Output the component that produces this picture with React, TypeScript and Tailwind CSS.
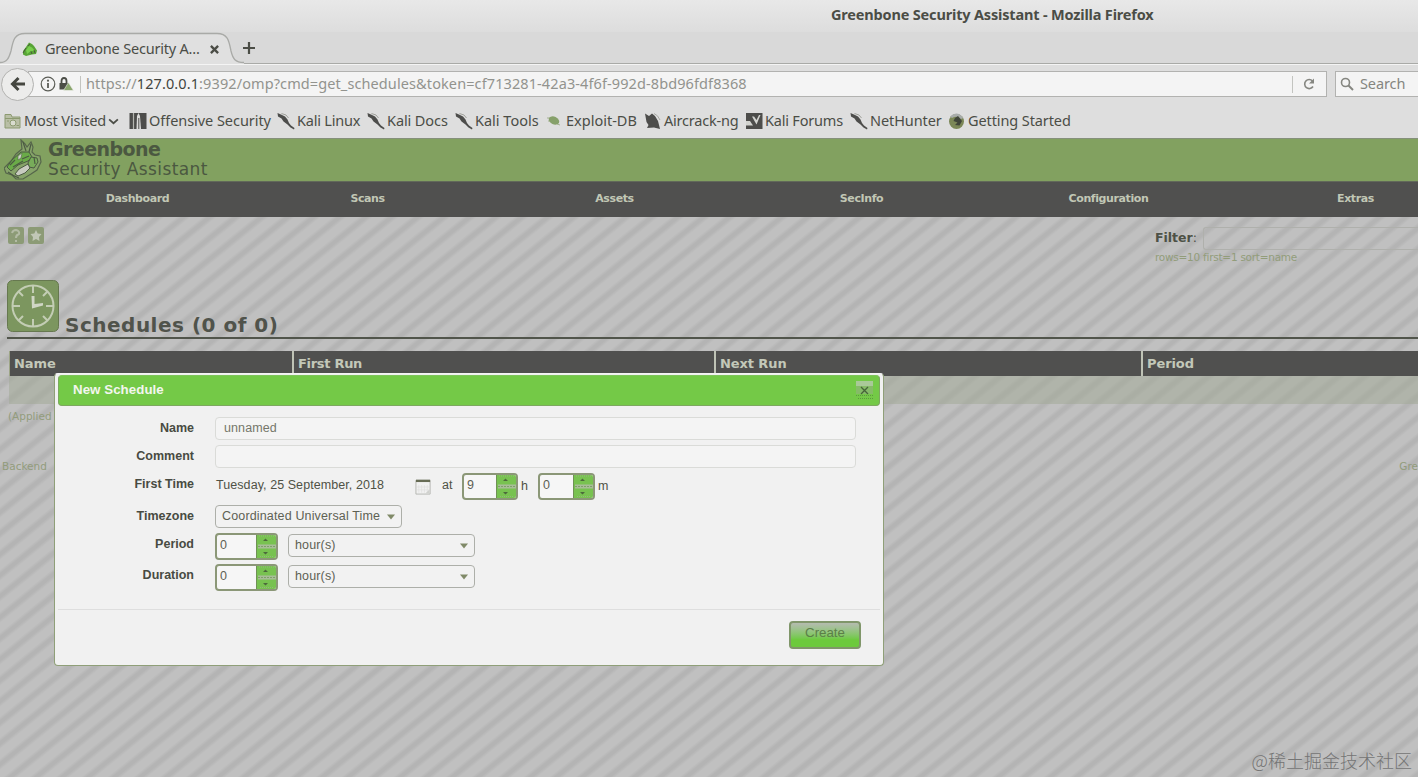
import type { ReactNode } from "react";
import { clsx } from "clsx";

function DragonIcon({ className }: { className?: string }) {
  return (
    <svg viewBox="0 0 16 16" className={className}>
      <path d="M1 10 L4 6 L7 1.5 L10 3 L12 5 L15 9.5 L14 13 L10 13.5 L4 15 L1 13.5 Z" fill="#58a436" />
      <path d="M4 9 L7 5 L10 6.5 L13 10 L9 10 L5 13 Z" fill="#79cf4e" />
      <path d="M1 12 L4 7 M9 10.5 L10 13 M12 9 L13 12 M6 5 L8 3" stroke="#4a5a3c" strokeWidth="1" fill="none" />
    </svg>
  );
}

function KaliIcon() {
  return (
    <svg viewBox="0 0 18 18" className="h-[18px] w-[18px] shrink-0">
      <path d="M0.500 1 L4 2.500 L8 4.500 L10.500 7.500 L12 11 L14 13.500 L17.500 16 L17 17.500 L13.500 15.500 L10.500 12.500 L6.500 9.500 L4.500 6.500 L1 4.500 Z" fill="#4d4d4b" />
      <path d="M4.500 1.500 L9 3 L11.500 6" stroke="#a0a19b" strokeWidth="1" fill="none" />
    </svg>
  );
}

function FolderIcon() {
  return (
    <svg viewBox="0 0 18 18" className="h-[18px] w-[18px] shrink-0">
      <path d="M1 2.5 H7 L8 5 H16 V16 H1 Z" fill="#b9bfa6" stroke="#8c9a70" />
      <path d="M1 6.5 H16" stroke="#8c9a70" />
      <circle cx="9" cy="11" r="3" fill="#d9dccf" stroke="#8c9a70" />
      <path d="M3 9 H5 M12.5 13.5 H15" stroke="#8c9a70" />
    </svg>
  );
}

function OffsecIcon() {
  return (
    <svg viewBox="0 0 18 18" className="h-[18px] w-[18px] shrink-0">
      <path d="M0.500 1 H17.500 V17 H0.500 Z" fill="#4d4d4b" />
      <path d="M4.5 1 V17" stroke="#b5b6b0" strokeWidth="1.2" />
      <path d="M7.500 17 L8 4 L9.500 1 L11 4 L12 17 Z" fill="#dcdcda" />
      <path d="M9.8 6 V17" stroke="#4d4d4b" strokeWidth="1" />
    </svg>
  );
}

function ExploitIcon() {
  return (
    <svg viewBox="0 0 18 18" className="h-[18px] w-[18px] shrink-0">
      <path d="M1 6 L5 6 M2 9 L5 9 M11 12 L14 13" stroke="#a5b193" />
      <ellipse cx="8" cy="8.500" rx="5.5" ry="3.8" transform="rotate(25 8 8.500)" fill="#86a06a" />
    </svg>
  );
}

function AircrackIcon() {
  return (
    <svg viewBox="0 0 18 18" className="h-[18px] w-[18px] shrink-0">
      <path d="M1 1.500 L5 4 L8 1.500 L11 4 L14 9 L16 17 L10 15.500 L3 16 L4.500 13 L2.500 10 Z" fill="#4d4d4b" />
      <path d="M10 1.500 Q14 3 16 8" stroke="#a8a9a3" fill="none" />
    </svg>
  );
}

function ForumsIcon() {
  return (
    <svg viewBox="0 0 18 18" className="h-[18px] w-[18px] shrink-0">
      <path d="M1 1 H17.500 V17 H1 Z" fill="#4d4d4b" />
      <path d="M1 4.500 H7 L9.500 9 L11.500 12.500 L15.500 3 L14 3 L11.500 8 L9 4.500 Z" fill="#d3d4d0" />
      <path d="M1 9 H5 L8 13.500 H1 Z" fill="#d3d4d0" />
    </svg>
  );
}

function FirefoxIcon() {
  return (
    <svg viewBox="0 0 18 18" className="h-[18px] w-[18px] shrink-0">
      <circle cx="8.500" cy="9.500" r="7.500" fill="#7b8757" />
      <path d="M2 4.500 Q9 -2 15.500 6 L13 7 Q9 3 4 6 Z" fill="#a9adab" />
      <path d="M7 6 L10 4 L14 9 L11.500 13.500 L7 13 L9.500 10.500 L5.500 9 Z" fill="#40453a" />
    </svg>
  );
}

const bookmarks: { label: string; icon: ReactNode; width: string; spacing: string; menu?: boolean }[] = [
  { label: "Most Visited", icon: <FolderIcon />, width: "w-[125px]", spacing: "tracking-[-0.1px]", menu: true },
  { label: "Offensive Security", icon: <OffsecIcon />, width: "w-[148px]", spacing: "tracking-[-0.05px]" },
  { label: "Kali Linux", icon: <KaliIcon />, width: "w-[90px]", spacing: "tracking-[-0.2px]" },
  { label: "Kali Docs", icon: <KaliIcon />, width: "w-[88px]", spacing: "tracking-[-0.1px]" },
  { label: "Kali Tools", icon: <KaliIcon />, width: "w-[91px]", spacing: "tracking-[0px]" },
  { label: "Exploit-DB", icon: <ExploitIcon />, width: "w-[98px]", spacing: "tracking-[0px]" },
  { label: "Aircrack-ng", icon: <AircrackIcon />, width: "w-[101px]", spacing: "tracking-[-0.2px]" },
  { label: "Kali Forums", icon: <ForumsIcon />, width: "w-[105px]", spacing: "tracking-[-0.2px]" },
  { label: "NetHunter", icon: <KaliIcon />, width: "w-[98px]", spacing: "tracking-[-0.1px]" },
  { label: "Getting Started", icon: <FirefoxIcon />, width: "w-[124px]", spacing: "tracking-[-0.1px]" },
];

const menuItems = ["Scans", "Assets", "SecInfo", "Configuration", "Extras"];

function BrowserChrome() {
  return (
    <div className="h-[138px] bg-[#dedede] font-['Noto_Sans',sans-serif] text-[#4b4d46]">
      <div className="h-8 bg-linear-to-b from-[#e8e8e8] to-[#dddddd] pt-[3px] pl-[831px] text-[14.5px] leading-[23px] font-bold tracking-[-0.17px] whitespace-nowrap">
        Greenbone Security Assistant - Mozilla Firefox
      </div>

      <div className="flex h-8 bg-[#d9d9d9]">
        <div className="relative h-8 w-[244px] shrink-0">
          <svg viewBox="0 0 244 32" className="absolute inset-0 h-8 w-[244px]">
            <path
              d="M0 30.5 C7 30.5 9 26 11 19 C13 9 14 1.5 25 1.5 H217 C228 1.5 229 9 231 19 C233 27 235 30.5 244 30.5 V32 H0 Z"
              fill="#e0e0e0"
            />
            <path
              d="M0 30.5 C7 30.5 9 26 11 19 C13 9 14 1.5 25 1.5 H217 C228 1.5 229 9 231 19 C233 27 235 30.5 244 30.5"
              fill="none"
              stroke="#a9aaa7"
              strokeWidth="1.3"
            />
          </svg>
          <div className="relative flex h-[34px] items-center pl-[22px]">
            <DragonIcon className="h-4 w-4" />
            <span className="ml-[7px] w-[165px] text-[14.5px] tracking-[-0.2px] whitespace-nowrap">
              Greenbone Security A...
            </span>
            <svg viewBox="0 0 10 10" className="h-[9px] w-[9px]">
              <path d="M1 1 L9 9 M9 1 L1 9" stroke="#4b4d46" strokeWidth="2.6" />
            </svg>
          </div>
        </div>
        <div className="flex flex-1 items-center border-b border-[#a9aaa7]">
          <svg viewBox="0 0 14 14" className="-ml-[2px] h-[14px] w-[14px]">
            <path d="M7 1 V13 M1 7 H13" stroke="#4b4d46" strokeWidth="2.200" />
          </svg>
        </div>
      </div>

      <div className="flex h-[41px] items-center border-t border-[#f4f4f4] pb-[2px] pl-px">
        <div className="z-10 flex h-[33px] w-[33px] shrink-0 items-center justify-center rounded-full border border-[#b2b2b0] bg-[#ececeb]">
          <svg viewBox="0 0 16 16" className="h-4 w-4">
            <path d="M15 8 H3 M8.5 2 L2.5 8 L8.5 14" fill="none" stroke="#454740" strokeWidth="3" />
          </svg>
        </div>
        <div className="-ml-[6px] flex h-[26px] w-[1299px] shrink-0 items-center border border-[#b2b2b0] bg-[#f4f4f4] pl-[11px]">
          <svg viewBox="0 0 16 16" className="h-4 w-4 shrink-0">
            <circle cx="8" cy="8" r="6.8" fill="none" stroke="#5b5d56" strokeWidth="1.2" />
            <path d="M8 7 V12" stroke="#5b5d56" strokeWidth="1.8" />
            <circle cx="8" cy="4.7" r="1.1" fill="#5b5d56" />
          </svg>
          <svg viewBox="0 0 16 16" className="ml-[2px] h-4 w-4 shrink-0">
            <path d="M3.5 7 V5 Q3.5 2 6 2 Q8.500 2 8.5 5 V7" fill="none" stroke="#4b4d46" strokeWidth="1.8" />
            <path d="M1.500 7 H10.500 V13.500 H1.500 Z" fill="#4b4d46" />
            <path d="M10.500 6.500 L15.500 14.500 H5.500 Z" fill="#8ba66e" stroke="#f1f1f1" strokeWidth="0.6" />
          </svg>
          <span className="ml-[6px] h-[17px] w-px bg-[#c3c4c0]" />
          <span className="ml-[5px] text-[14.5px] tracking-[0.1px] whitespace-nowrap text-[#92938e]">
            https://<span className="text-[#42443e]">127.0.0.1</span>
            :9392/omp?cmd=get_schedules&amp;token=cf713281-42a3-4f6f-992d-8bd96fdf8368
          </span>
          <span className="mr-[10px] ml-auto flex h-[17px] items-center border-l border-[#c3c4c0] pl-[9px]">
            <svg viewBox="0 0 14 14" className="h-[14px] w-[14px]">
              <path d="M11 9.500 A4.500 4.500 0 1 1 10.500 4" fill="none" stroke="#858680" strokeWidth="1.6" />
              <path d="M12 1.500 V6.500 H7 Z" fill="#858680" />
            </svg>
          </span>
        </div>
        <div className="ml-[8px] flex h-[26px] flex-1 items-center border border-r-0 border-[#b2b2b0] bg-[#f4f4f4] pl-1">
          <svg viewBox="0 0 14 14" className="h-[14px] w-[14px]">
            <circle cx="5.500" cy="5.500" r="4" fill="none" stroke="#858680" strokeWidth="1.6" />
            <path d="M8.500 8.500 L13 13" stroke="#858680" strokeWidth="2" />
          </svg>
          <span className="ml-[6px] text-[14.5px] tracking-[-0.1px] text-[#858680]">Search</span>
        </div>
      </div>

      <div className="flex h-[33px] items-center overflow-hidden pb-px pl-1 text-[14.5px]">
        {bookmarks.map((b) => (
          <div key={b.label} className={clsx("flex shrink-0 items-center whitespace-nowrap", b.width)}>
            {b.icon}
            <span className={clsx("ml-[2px]", b.spacing)}>{b.label}</span>
            {b.menu && (
              <svg viewBox="0 0 12 8" className="ml-[2px] h-[7px] w-[11px]">
                <path d="M1 1.500 L6 6 L11 1.500" fill="none" stroke="#4b4d46" strokeWidth="2" />
              </svg>
            )}
          </div>
        ))}
      </div>
    </div>
  );
}

function GreenboneHeader() {
  return (
    <header className="flex h-[43px] border-t border-[#85907b] bg-[#82a160] pl-1">
      <svg viewBox="0 0 40 42" className="h-[42px] w-[40px] shrink-0">
        <path
          d="M17 1 L21 5 L23 8 L27 3 L29 8 L28 13 L31 16 L36 17 L37 23 L33 31 L27 35 L19 40 L12 40 L8 36 L2 34 L0 29 L7 22 L12 15 L18 10 Z"
          fill="#86a369"
          stroke="#56664b"
          strokeWidth="1.200"
        />
        <path d="M3 28 L8 21 L17 13 L25 13 L28 18 L24 22 L14 26 L7 32 Z" fill="#6aab48" stroke="#4b5a42" />
        <path d="M24 24 L27 18 L33 19 L34 23 L30 29 L25 28 Z" fill="#78ac5a" stroke="#4b5a42" />
        <path d="M11 35 L15 30 L24 25 L26 29 L21 34 L14 37 Z" fill="#c8cbc0" stroke="#4b5a42" />
        <path d="M14 17 L18 14 L17 19 L14 21 Z" fill="#d0d2ca" stroke="#56664b" strokeWidth="0.600" />
        <path d="M19 3 L22 12 M27 5 L25 13 M6 26 L11 21 M9 28 L19 22 M18 20 L25 17 M30 18 L31 25 M4 33 Q9 37 15 39" fill="none" stroke="#4b5a42" strokeWidth="1.200" />
      </svg>
      <div className="ml-1 font-['DejaVu_Sans',sans-serif] text-[#4b5841]">
        <div className="h-[20px] text-[19px] leading-[20px] font-bold tracking-[-0.55px]">Greenbone</div>
        <div className="text-[17px] leading-[20px] tracking-[0.4px] whitespace-nowrap">Security Assistant</div>
      </div>
    </header>
  );
}

function Spinner({ value, width = "w-[63px]" }: { value: string; width?: string }) {
  return (
    <div className={clsx("flex h-[27px] overflow-hidden rounded-[4px] border-2 border-[#8b9777] bg-[#f6f6f6]", width)}>
      <span className="flex-1 pl-[3px] text-[12.5px] leading-[21px] text-[#5e6154]">{value}</span>
      <svg viewBox="0 0 20 23" className="h-[23px] w-[20px]">
        <path d="M0 0 H20 V23 H0 Z" fill="#78c250" />
        <path d="M0.500 0 V23" stroke="#6f9155" />
        <path d="M2 11.500 H20" stroke="#a8bd98" strokeWidth="4" />
        <path d="M2 11.500 H20" stroke="#7f9f69" strokeWidth="1" strokeDasharray="2 1" />
        <path d="M3 1 H18 M4 21.500 H17" stroke="#92b97c" strokeDasharray="1 1" />
        <path d="M7 6 L9.500 3.500 L12 6 Z M7 17 L9.500 19.500 L12 17 Z" fill="#4c693c" />
      </svg>
    </div>
  );
}

function Select({ value, width }: { value: string; width: string }) {
  return (
    <div
      className={clsx(
        "flex h-[23px] items-center justify-between rounded-[4px] border border-[#adafa9] bg-[#f2f2f2] pr-[6px] pl-[6px]",
        "text-[12.5px] whitespace-nowrap text-[#5e6154]",
        width
      )}
    >
      <span className="tracking-[0.15px]">{value}</span>
      <svg viewBox="0 0 8 6" className="h-[6px] w-[8px]">
        <path d="M0 0.500 H8 L4 5.500 Z" fill="#808a68" />
      </svg>
    </div>
  );
}

function FormRow({ label, className, children }: { label: string; className: string; children: ReactNode }) {
  return (
    <div className={clsx("flex", className)}>
      <label className="w-[139px] shrink-0 text-right text-[12.5px] leading-[23px] font-bold text-[#484b42]">{label}</label>
      <div className="ml-[21px] flex">{children}</div>
    </div>
  );
}

function NewScheduleDialog() {
  return (
    <div
      role="dialog"
      className="absolute top-[373px] left-[54px] flex h-[293px] w-[830px] flex-col rounded-[4px] border border-[#8f9f78] border-t-[#f4f4f4] bg-[#f1f1f1] font-['Liberation_Sans',sans-serif]"
    >
      <div className="mx-[3px] mt-px flex h-[31px] shrink-0 justify-between rounded-[4px] border border-[#7da85f] border-t-[#7fc45c] bg-[#74c947] pr-[5px] pl-[14px]">
        <span className="text-[13.3px] leading-[27px] font-bold tracking-[0.05px] text-[#f3f6ef]">New Schedule</span>
        <svg viewBox="0 0 18 18" className="mt-[5px] h-[18px] w-[18px]">
          <path d="M0 0 H17 V13 H0 Z" fill="#a9c998" />
          <path d="M0 5 H17 V13 H0 Z" fill="#86bb68" />
          <path d="M5 6 L12 13 M12 6 L5 13" stroke="#466339" strokeWidth="1.300" />
          <path d="M0 14.500 H17 M2 17.500 H17" stroke="#5b9b3d" strokeDasharray="1 1" />
        </svg>
      </div>

      <div className="mx-[3px] mt-[11px] h-[193px] shrink-0 border-b border-[#dedede]">
        <div className="-ml-[3px]">
          <FormRow label="Name" className="h-7">
            <div className="h-[23px] w-[641px] rounded-[4px] border border-[#dadbd8] bg-[#f4f4f4] pl-2 text-[12.5px] leading-[20px] tracking-[0.1px] text-[#74776a]">
              unnamed
            </div>
          </FormRow>
          <FormRow label="Comment" className="h-7">
            <div className="h-[23px] w-[641px] rounded-[4px] border border-[#dadbd8] bg-[#f4f4f4]" />
          </FormRow>
          <FormRow label="First Time" className="h-[31px]">
            <div className="flex text-[12.5px] leading-[25px] text-[#4f5246]">
              <span className="ml-px w-[199px] tracking-[0.07px] whitespace-nowrap">Tuesday, 25 September, 2018</span>
              <svg viewBox="0 0 18 18" className="mt-[5px] h-[18px] w-[17px]">
                <path d="M1 2 H16 V16.500 H1 Z" fill="#f1f1f1" stroke="#b5b6b1" />
                <path d="M1 2.500 H16" stroke="#676c55" strokeWidth="2.500" />
                <path d="M4 7 V15 M7 7 V15 M10 7 V15 M13 7 V15 M2 9 H15 M2 12 H15" stroke="#dededc" strokeWidth="0.700" />
                <path d="M11 16 L15.500 11.500 V16 Z" fill="#d0d1ce" />
              </svg>
              <span className="ml-[10px] w-[20px]">at</span>
              <Spinner value="9" width="w-[56px]" />
              <span className="mt-px ml-[3px] w-[17px]">h</span>
              <Spinner value="0" width="w-[57px]" />
              <span className="mt-px ml-[3px]">m</span>
            </div>
          </FormRow>
          <FormRow label="Timezone" className="mt-px h-7">
            <Select value="Coordinated Universal Time" width="w-[187px]" />
          </FormRow>
          <FormRow label="Period" className="h-[31px]">
            <Spinner value="0" />
            <div className="mt-px ml-[10px]">
              <Select value="hour(s)" width="w-[187px]" />
            </div>
          </FormRow>
          <FormRow label="Duration" className="h-[31px]">
            <Spinner value="0" />
            <div className="mt-px ml-[10px]">
              <Select value="hour(s)" width="w-[187px]" />
            </div>
          </FormRow>
        </div>
      </div>

      <div className="flex justify-end pt-[11px] pr-[22px]">
        <button className="h-[28px] w-[72px] rounded-[4px] border-2 border-[#80966a] bg-linear-to-b from-[#b5bbb0] to-[#6cca3c] to-70% text-[13.3px] leading-[20px] text-[#5c7f48]">
          <span className="block h-6">Create</span>
        </button>
      </div>
    </div>
  );
}

export default function App() {
  return (
    <div className="relative h-[777px] w-[1418px] overflow-hidden bg-[#bebebe] bg-[linear-gradient(to_bottom_right,#c0c0c0_6%,#b4b4b4_16%,#b4b4b4_24%,#c0c0c0_34%,#c0c0c0_56%,#b4b4b4_66%,#b4b4b4_74%,#c0c0c0_84%)] bg-[size:26px_21px] font-['DejaVu_Sans',sans-serif]">
      <BrowserChrome />
      <GreenboneHeader />

      <nav className="flex h-9 border-t border-[#62695a] bg-[#50504f] text-center text-[11px] leading-[33px] font-bold tracking-[-0.4px] text-[#c1c7b5]">
        <span className="ml-[31px] w-[213px] shrink-0">Dashboard</span>
        {menuItems.map((item) => (
          <span key={item} className="w-[247px] shrink-0">
            {item}
          </span>
        ))}
      </nav>

      <main>
        <div className="flex h-[63px] justify-between">
          <div className="mt-[10px] ml-2 flex gap-1">
            <svg viewBox="0 0 16 17" className="h-[17px] w-4">
              <rect width="16" height="17" rx="2" fill="#8c9b76" />
              <path d="M4 6 Q5 3 8 3 Q12 4 11 7 Q8 8 8 11 M8 13 V15" fill="none" stroke="#b3bba5" strokeWidth="2" />
            </svg>
            <svg viewBox="0 0 16 17" className="h-[17px] w-4">
              <rect width="16" height="17" rx="2" fill="#8c9b76" />
              <path d="M8 3 L9.700 6.500 L13.500 7 L11 10 L11.500 14 L8 12 L4.500 14 L5 10 L2.500 7 L6.300 6.500 Z" fill="#c1c7b7" />
            </svg>
          </div>
          <div className="mt-[10px] w-[263px]">
            <div className="flex h-[23px] items-center text-[12.5px] text-[#4d5146]">
              <span className="font-bold">Filter</span>:
              <span className="ml-[6px] h-[23px] flex-1 rounded-l-[3px] border border-r-0 border-[#afb0ac]" />
            </div>
            <div className="text-[10.5px] leading-[15px] tracking-[-0.25px] text-[#929d7a]">rows=10 first=1 sort=name</div>
          </div>
        </div>

        <div className="ml-[7px] flex h-[59px] border-b-2 border-[#51554b]">
          <svg viewBox="0 0 52 52" className="h-[52px] w-[52px]">
            <rect x="0.500" y="0.500" width="51" height="51" rx="5" fill="#7c965f" stroke="#66784f" />
            <circle cx="26" cy="26" r="20.500" fill="none" stroke="#c3cdb4" strokeWidth="2" />
            <path
              d="M26 5 V13 M26 39 V47 M5 26 H13 M39 26 H47 M11.500 11.500 L16 16 M36 36 L40.500 40.500 M40.500 11.500 L36 16 M16 36 L11.500 40.500"
              stroke="#c3cdb4"
              strokeWidth="2"
            />
            <path d="M24.500 16 H27.500 V24 L36 23 V25.500 L25 28.500 Z" fill="#d0d6c5" />
          </svg>
          <h1 className="mt-8 ml-[6px] text-[20px] leading-[26px] font-bold tracking-[0.5px] text-[#50534b]">
            Schedules (0 of 0)
          </h1>
        </div>

        <div className="mt-[12px] ml-[9px] flex h-[25px] border-l border-[#9da586] bg-[#50504f] text-[13px] leading-[25px] font-bold tracking-[-0.1px] text-[#c3c8b9]">
          <span className="w-[284px] shrink-0 border-r-2 border-[#bfc3b6] pl-1">Name</span>
          <span className="w-[422px] shrink-0 border-r-2 border-[#bfc3b6] pl-1 tracking-[-0.3px]">First Run</span>
          <span className="w-[427px] shrink-0 border-r-2 border-[#bfc3b6] pl-1">Next Run</span>
          <span className="pl-1">Period</span>
        </div>
        <div className="ml-[9px] h-7 bg-[#a3aa98]/55" />
        <div className="mt-1 ml-2 h-[18px] text-[10.5px] leading-[16px] text-[#929c7c]">(Applied</div>
        <div className="mt-[32px] flex justify-between pl-[2px] text-[10.5px] leading-[16px] text-[#929c7c]">
          <span>Backend</span>
          <span>Gre</span>
        </div>
      </main>

      <NewScheduleDialog />

      <div className="absolute right-[6px] bottom-[4px] font-['Noto_Sans_CJK_SC',sans-serif] text-[18px] leading-[26px] font-light whitespace-nowrap text-[#747474]">
        @稀土掘金技术社区
      </div>
    </div>
  );
}
